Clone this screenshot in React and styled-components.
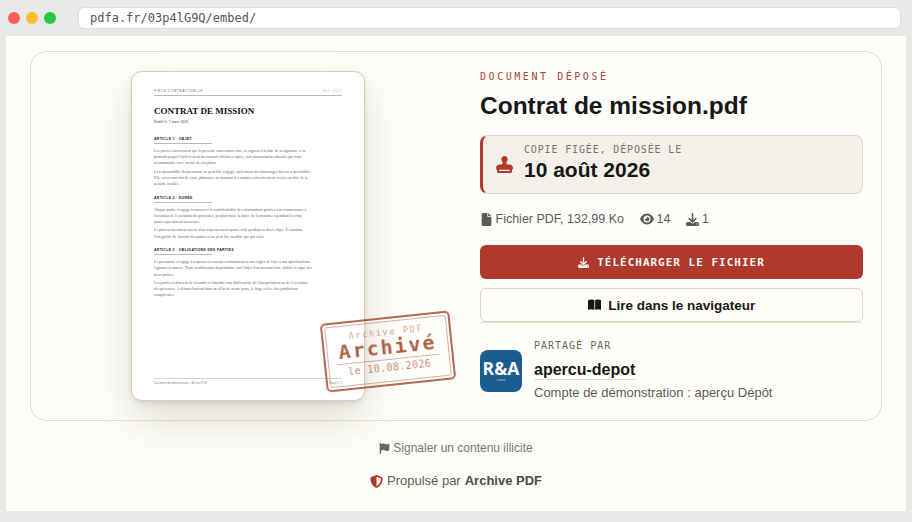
import styled, { createGlobalStyle } from "styled-components";
import {
  FaBookOpen,
  FaDownload,
  FaEye,
  FaFile,
  FaFlag,
  FaShieldHalved,
  FaStamp,
} from "react-icons/fa6";

const GlobalStyle = createGlobalStyle`
  html, body {
    margin: 0;
    padding: 0;
    background: #e9e9e9;
  }
  * {
    box-sizing: border-box;
  }
`;

const sans = `"Liberation Sans", Arial, sans-serif`;
const serif = `"Liberation Serif", "Times New Roman", serif`;
const mono = `"DejaVu Sans Mono", "Liberation Mono", monospace`;

const Shell = styled.div`
  width: 912px;
  height: 522px;
  overflow: hidden;
  background: #e9e9e9;
  font-family: ${sans};
`;

const ChromeBar = styled.header`
  height: 36px;
  display: flex;
  align-items: center;
  padding: 0 8px;
`;

const Dot = styled.span`
  width: 12px;
  height: 12px;
  border-radius: 50%;
  margin-right: 6px;
  background: ${(p) => p.$color};
`;

const UrlBox = styled.div`
  margin-left: 16px;
  width: 823px;
  height: 22px;
  padding-left: 11px;
  display: flex;
  align-items: center;
  background: #fff;
  border: 1px solid #dcdcdc;
  border-radius: 6px;
  font: 12px ${mono};
  color: #555;
`;

const Viewport = styled.main`
  margin: 0 6px;
  height: 475px;
  padding: 15px 24px 0;
  background: #fefdf8;
`;

const Card = styled.section`
  height: 370px;
  padding: 19px 18px;
  display: grid;
  grid-template-columns: 398px 383px;
  column-gap: 33px;
  border: 1px solid #e2dfca;
  border-radius: 16px;
  background: #fffefa;
`;

const PreviewCol = styled.div`
  display: flex;
  justify-content: center;
`;

const Paper = styled.article`
  position: relative;
  width: 234px;
  height: 330px;
  padding: 17px 22px 0;
  display: flex;
  flex-direction: column;
  background: #fff;
  border: 1px solid #dccfb4;
  border-radius: 11px;
  box-shadow: 0 18px 40px rgba(70, 60, 40, 0.18), 0 2px 5px rgba(70, 60, 40, 0.12);
  font-family: ${serif};
  color: #333;
`;

const PaperHead = styled.div`
  display: flex;
  justify-content: space-between;
  padding-bottom: 2px;
  border-bottom: 1px solid #b8b8b8;
  font: 3px/4px ${sans};
  letter-spacing: 0.7px;
  color: #666;
`;

const PaperRef = styled.span`
  color: #b5b5b5;
`;

const PaperTitle = styled.h1`
  margin: 9px 0 0;
  font: bold 9px/12px ${serif};
  color: #111;
`;

const PaperDate = styled.div`
  margin-top: 2px;
  font-size: 4px;
  line-height: 6px;
  color: #444;
`;

const ArticleTitle = styled.h2`
  margin: ${(p) => (p.$first ? 12 : 6.5)}px 0 4px;
  padding-bottom: 1px;
  width: 58px;
  border-bottom: 1px solid #bbb;
  font: bold 3.5px/5px ${sans};
  letter-spacing: 0.3px;
  white-space: nowrap;
  color: #222;
`;

const PaperText = styled.p`
  margin: 0 0 2px;
  width: 158px;
  font-size: 3.9px;
  line-height: 6.2px;
  color: #666;
`;

const PaperFoot = styled.footer`
  margin-top: auto;
  margin-bottom: 15px;
  padding-top: 2px;
  display: flex;
  justify-content: space-between;
  border-top: 1px solid #d5d5d5;
  font: 2.8px/4px ${sans};
  color: #888;
`;

const Stamp = styled.div`
  position: absolute;
  right: -89px;
  bottom: 14px;
  width: 130px;
  height: 69px;
  padding: 2px;
  transform: rotate(-6deg);
  border: 2.5px solid rgba(163, 80, 50, 0.85);
  border-radius: 5px;
  filter: url(#stamp-rough);
  font-family: ${mono};
  color: rgba(163, 80, 50, 0.9);
`;

const StampFilterDefs = styled.svg`
  display: block;
  width: 0;
  height: 0;
`;

const StampInner = styled.div`
  height: 100%;
  display: flex;
  flex-direction: column;
  align-items: center;
  border: 1px solid rgba(163, 80, 50, 0.45);
  border-radius: 3px;
`;

const StampTop = styled.span`
  margin-top: 5px;
  font-size: 8.5px;
  line-height: 10px;
  letter-spacing: 1.7px;
  opacity: 0.6;
`;

const StampMain = styled.span`
  font-size: 20px;
  font-weight: bold;
  line-height: 21px;
  letter-spacing: 2px;
`;

const StampDate = styled.span`
  margin-top: 1px;
  width: 102px;
  padding-top: 2px;
  border-top: 1px solid rgba(163, 80, 50, 0.6);
  font-size: 10px;
  line-height: 11px;
  letter-spacing: 0.4px;
  text-align: center;
  white-space: nowrap;
  opacity: 0.75;
`;

const InfoCol = styled.div`
  display: flex;
  flex-direction: column;
  min-width: 0;
`;

const Eyebrow = styled.div`
  font: 10px/12px ${mono};
  letter-spacing: 2.55px;
  color: #a5453c;
`;

const FileName = styled.h1`
  margin: 8px 0 0;
  font: bold 24.5px/30px ${sans};
  color: #171717;
`;

const DepositBox = styled.div`
  margin-top: 14px;
  height: 59px;
  padding-left: 13px;
  display: flex;
  align-items: center;
  gap: 11px;
  background: #f4f0e9;
  border: 1px solid #dad6c0;
  border-left: 3px solid #b0392d;
  border-radius: 8px;
  color: #b0392d;
  font-size: 17px;
`;

const DepositText = styled.div`
  padding-bottom: 2px;
`;

const DepositLabel = styled.div`
  font: 10px/12px ${mono};
  letter-spacing: 0.85px;
  color: #77756b;
`;

const DepositDate = styled.div`
  margin-top: 1px;
  font: bold 21px/26px ${sans};
  color: #171717;
`;

const MetaRow = styled.div`
  margin-top: 17px;
  height: 16px;
  display: flex;
  align-items: center;
  gap: 16px;
  font-size: 12.5px;
  color: #5b5b56;
`;

const MetaItem = styled.span`
  display: inline-flex;
  align-items: center;
  gap: 2.5px;

  svg {
    font-size: ${(p) => p.$icon || 13}px;
  }
`;

const PrimaryButton = styled.a`
  margin-top: 18px;
  height: 34px;
  display: flex;
  align-items: center;
  justify-content: center;
  gap: 8px;
  background: #b0392d;
  border-radius: 6px;
  font: bold 11px ${mono};
  letter-spacing: 1px;
  color: #fdf8f0;
`;

const SecondaryButton = styled.a`
  margin-top: 9px;
  height: 34px;
  display: flex;
  align-items: center;
  justify-content: center;
  gap: 7px;
  background: #fffefa;
  border: 1px solid #d9d6bd;
  border-radius: 6px;
  font: bold 13.5px ${sans};
  color: #171717;
`;

const Sharer = styled.div`
  padding-top: 17px;
  display: flex;
  gap: 12px;
  align-items: flex-start;
  border-top: 1px solid #e6e3d3;
`;

const Avatar = styled.div`
  width: 42px;
  height: 42px;
  margin-top: 10px;
  flex: none;
  display: flex;
  flex-direction: column;
  align-items: center;
  justify-content: center;
  background: #1a5c8f;
  border-radius: 8px;
  font: bold 17.5px/16px "Open Sans", ${sans};
  color: #fff;
`;

const AvatarTag = styled.span`
  margin-top: 2px;
  font: 3.5px/4px ${sans};
  color: #b8d8a0;
`;

const SharerLabel = styled.div`
  font: 10px/12px ${mono};
  letter-spacing: 1px;
  color: #66665f;
`;

const SharerName = styled.div`
  display: inline-block;
  margin-top: 8px;
  border-bottom: 1px solid #dedbc9;
  font: bold 16px/19px ${sans};
  color: #171717;
`;

const SharerDesc = styled.div`
  margin-top: 5px;
  font-size: 13px;
  line-height: 16px;
  color: #5b5b56;
`;

const Foot = styled.div`
  display: flex;
  flex-direction: column;
  align-items: center;
`;

const ReportLink = styled.a`
  margin-top: 19px;
  display: flex;
  align-items: center;
  gap: 3px;
  font-size: 12px;
  line-height: 16px;
  color: #77776f;

  svg {
    font-size: 11px;
    color: #666;
  }
`;

const PoweredBy = styled.div`
  margin-top: 17px;
  display: flex;
  align-items: center;
  gap: 4px;
  font-size: 13px;
  line-height: 16px;
  color: #5b5b56;

  svg {
    font-size: 13px;
    color: #b0392d;
  }

  b {
    color: #4a4a46;
  }
`;

export default function App() {
  return (
    <Shell>
      <GlobalStyle />
      <StampFilterDefs aria-hidden="true">
        <filter id="stamp-rough">
          <feTurbulence type="fractalNoise" baseFrequency="0.8" numOctaves="2" seed="4" />
          <feDisplacementMap in="SourceGraphic" scale="1.2" />
        </filter>
      </StampFilterDefs>
      <ChromeBar>
        <Dot $color="#ff5f57" />
        <Dot $color="#febc2e" />
        <Dot $color="#28c840" />
        <UrlBox>pdfa.fr/03p4lG9Q/embed/</UrlBox>
      </ChromeBar>
      <Viewport>
        <Card>
          <PreviewCol>
            <Paper>
              <PaperHead>
                <span>PIÈCE CONTRACTUELLE</span>
                <PaperRef>Réf. 0114</PaperRef>
              </PaperHead>
              <PaperTitle>CONTRAT DE MISSION</PaperTitle>
              <PaperDate>Établi le 7 mars 2026</PaperDate>

              <ArticleTitle $first>ARTICLE 1 · OBJET</ArticleTitle>
              <PaperText>
                Les parties conviennent que la présente convention entre en vigueur à la date de sa signature et se
                poursuit jusqu'à l'achèvement des travaux définis ci-après, sauf dénonciation adressée par lettre
                recommandée avec accusé de réception.
              </PaperText>
              <PaperText>
                La responsabilité du prestataire ne peut être engagée qu'à raison des dommages directs et prévisibles.
                Elle est en tout état de cause plafonnée au montant des sommes effectivement versées au titre de la
                période écoulée.
              </PaperText>

              <ArticleTitle>ARTICLE 2 · DURÉE</ArticleTitle>
              <PaperText>
                Chaque partie s'engage à conserver la confidentialité des informations portées à sa connaissance à
                l'occasion de l'exécution des présentes, pendant toute la durée de la mission et pendant les cinq années
                qui suivent son terme.
              </PaperText>
              <PaperText>
                Le présent document atteste d'un séquencement ayant existé pendant sa durée objet. Il constitue
                l'intégralité de l'accord des parties et ne peut être modifié que par écrit.
              </PaperText>

              <ArticleTitle>ARTICLE 3 · OBLIGATIONS DES PARTIES</ArticleTitle>
              <PaperText>
                Le prestataire s'engage à respecter les normes conformément aux règles de l'art et aux spécifications
                figurant en annexe. Toute modification du périmètre fait l'objet d'un avenant écrit, chiffré et signé des
                deux parties.
              </PaperText>
              <PaperText>
                Les parties s'efforcent de résoudre à l'amiable tout différend né de l'interprétation ou de l'exécution
                des présentes. À défaut d'accord dans un délai de trente jours, le litige relève des juridictions
                compétentes.
              </PaperText>

              <PaperFoot>
                <span>Document de démonstration · Archive PDF</span>
                <span>Page 1 / 1</span>
              </PaperFoot>

              <Stamp>
                <StampInner>
                  <StampTop>Archive PDF</StampTop>
                  <StampMain>Archivé</StampMain>
                  <StampDate>le 10.08.2026</StampDate>
                </StampInner>
              </Stamp>
            </Paper>
          </PreviewCol>

          <InfoCol>
            <Eyebrow>DOCUMENT DÉPOSÉ</Eyebrow>
            <FileName>Contrat de mission.pdf</FileName>
            <DepositBox>
              <FaStamp />
              <DepositText>
                <DepositLabel>COPIE FIGÉE, DÉPOSÉE LE</DepositLabel>
                <DepositDate>10 août 2026</DepositDate>
              </DepositText>
            </DepositBox>
            <MetaRow>
              <MetaItem><FaFile /> Fichier PDF, 132,99 Ko</MetaItem>
              <MetaItem $icon={14}><FaEye /> 14</MetaItem>
              <MetaItem><FaDownload /> 1</MetaItem>
            </MetaRow>
            <PrimaryButton><FaDownload /> TÉLÉCHARGER LE FICHIER</PrimaryButton>
            <SecondaryButton><FaBookOpen /> Lire dans le navigateur</SecondaryButton>
            <Sharer>
              <Avatar>
                R&amp;A
                <AvatarTag>cision</AvatarTag>
              </Avatar>
              <div>
                <SharerLabel>PARTAGÉ PAR</SharerLabel>
                <SharerName>apercu-depot</SharerName>
                <SharerDesc>Compte de démonstration : aperçu Dépôt</SharerDesc>
              </div>
            </Sharer>
          </InfoCol>
        </Card>
        <Foot>
          <ReportLink><FaFlag /> Signaler un contenu illicite</ReportLink>
          <PoweredBy><FaShieldHalved /> Propulsé par <b>Archive PDF</b></PoweredBy>
        </Foot>
      </Viewport>
    </Shell>
  );
}
